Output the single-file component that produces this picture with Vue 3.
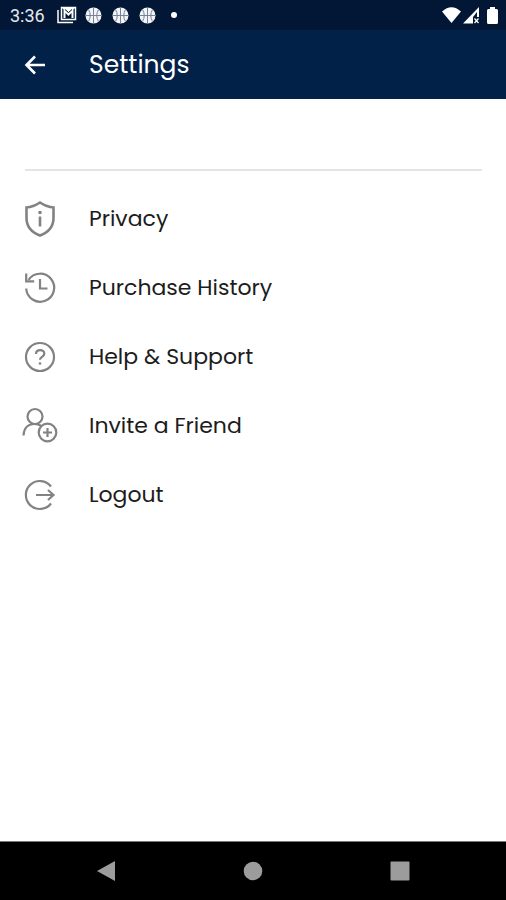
<script setup>
const menuItems = [
  { id: 'privacy', label: 'Privacy' },
  { id: 'history', label: 'Purchase History' },
  { id: 'help', label: 'Help & Support' },
  { id: 'invite', label: 'Invite a Friend' },
  { id: 'logout', label: 'Logout' }
]
</script>

<template>
  <div class="screen">
    <div class="status-bar">
      <span class="time">3:36</span>
      <div class="notifications">
        <svg width="20" height="18" viewBox="0 0 20 18" fill="none" stroke="#fff">
          <path d="M1 4v12.500h15" stroke-width="1.500" />
          <rect x="4.500" y="1.500" width="14" height="12" stroke-width="1.500" />
          <path d="M5 2h13l-6.500 5z" fill="#fff" stroke="none" />
          <path d="M7.500 12V4.500l4 4 4-4V12" stroke-width="2" />
          <path d="M8 3.500l3.500 3 3.500-3" stroke="#011735" stroke-width="1" />
        </svg>
        <svg v-for="n in 3" :key="n" width="17" height="17" viewBox="0 0 17 17">
          <circle cx="8.5" cy="8.5" r="8" fill="#f2f4f6" />
          <g fill="none" stroke="#76829a" stroke-width="1">
            <path d="M8.5 1v15M1 8.5h15M3.5 2.5q3.5 6 0 12M13.5 2.5q-3.5 6 0 12" />
          </g>
        </svg>
      </div>
      <span class="more-dot"></span>
      <div class="system-icons">
        <svg width="19" height="16" viewBox="0 0 19 16">
          <path d="M0 4.500Q9.500-4 19 4.500L9.500 16z" fill="#fff" />
        </svg>
        <svg width="17" height="17" viewBox="0 0 17 17">
          <path d="M0 16.500L16 0v16.500z" fill="#fff" />
          <path d="M10 10l4-5v5z" fill="#011735" />
          <path d="M10 10h7v7h-7z" fill="#011735" />
          <path d="M11.500 11.500l4 4.500M15.500 11.500l-4 4.500" stroke="#fff" stroke-width="1.300" />
        </svg>
        <svg width="11" height="17" viewBox="0 0 11 17">
          <path d="M3 0h5v2h1.500Q11 2 11 3.500v12q0 1.500-1.500 1.500h-8Q0 17 0 15.500v-12Q0 2 1.500 2H3z" fill="#fff" />
        </svg>
      </div>
    </div>

    <header class="app-bar">
      <button class="back" type="button" aria-label="Back">
        <svg width="22" height="20" viewBox="0 0 22 20" fill="none" stroke="#fff" stroke-width="2.6">
          <path d="M21 10H3M11 1.500L2.500 10l8.500 8.500" />
        </svg>
      </button>
      <h1>Settings</h1>
    </header>

    <main class="content">
      <ul class="menu">
        <li v-for="item in menuItems" :key="item.id">
          <a class="menu-item" :href="'#' + item.id">
            <svg class="menu-icon" viewBox="0 0 38 38">
              <template v-if="item.id === 'privacy'">
                <path d="M19 2.500Q26 7 32.500 7.500V18C32.500 27 27 32.500 19 35.500C11 32.500 5.500 27 5.500 18V7.500Q12 7 19 2.500z" stroke-width="2.6" />
                <path d="M19 16.500v10" stroke-width="2.6" />
                <circle class="dot" cx="19" cy="12.500" r="1.800" />
              </template>
              <template v-else-if="item.id === 'history'">
                <path d="M5.200 19.500A14 14 0 1 0 7.500 11" />
                <path d="M5.200 4.500v7.800h8M19 10v9.500h7.500" />
              </template>
              <template v-else-if="item.id === 'help'">
                <circle cx="19" cy="19" r="14" />
                <path d="M15 16c0-5.200 8.300-5 8.300-.5 0 3.500-4.300 3.200-4.300 6.300" />
                <circle class="dot" cx="19" cy="25.500" r="1.300" />
              </template>
              <template v-else-if="item.id === 'invite'">
                <circle cx="14" cy="9.500" r="7.500" />
                <path d="M2.500 28.500C3 20.500 7.500 17 13 17q4.500 0 7.500 2" />
                <circle cx="26.500" cy="25.500" r="8.800" />
                <path d="M26.500 21v9M22 25.500h9" />
              </template>
              <template v-else>
                <path d="M30 10.500A14 14 0 1 0 30 27.500" />
                <path d="M15 19h17M27 14l5.500 5-5.500 5" />
              </template>
            </svg>
            <span>{{ item.label }}</span>
          </a>
        </li>
      </ul>
    </main>

    <nav class="nav-bar">
      <button type="button" aria-label="Back">
        <svg width="20" height="22" viewBox="0 0 20 22"><path d="M1 11L19 1v20z" /></svg>
      </button>
      <button type="button" aria-label="Home">
        <svg width="20" height="20" viewBox="0 0 20 20"><circle cx="10" cy="10" r="9.300" /></svg>
      </button>
      <button type="button" aria-label="Recent apps">
        <svg width="20" height="20" viewBox="0 0 20 20"><rect x="0.500" y="0.500" width="19" height="19" rx="1" /></svg>
      </button>
    </nav>
  </div>
</template>

<style>
body {
  margin: 0;
}
</style>

<style scoped>
.screen {
  display: flex;
  flex-direction: column;
  min-height: 100vh;
  background: #fff;
  font-family: Poppins, Inter, sans-serif;
}

svg {
  display: block;
}

button {
  display: flex;
  align-items: center;
  justify-content: center;
  padding: 0;
  border: none;
  background: none;
  cursor: pointer;
}

.status-bar {
  display: flex;
  align-items: center;
  height: 30px;
  padding: 0 8px 0 10px;
  background: #011735;
  color: #e6e9ee;
}

.time {
  width: 47px;
  font-family: Roboto, sans-serif;
  font-size: 18px;
}

.notifications {
  display: flex;
  align-items: center;
  gap: 10px;
}

.notifications svg:first-child {
  margin-right: -2px;
}

.more-dot {
  width: 6px;
  height: 6px;
  margin-left: 15px;
  border-radius: 50%;
  background: #fff;
}

.system-icons {
  display: flex;
  align-items: center;
  gap: 2px;
  margin-left: auto;
}

.system-icons svg:last-child {
  margin-left: 5px;
}

.app-bar {
  display: flex;
  align-items: center;
  height: 69px;
  padding: 0 24px;
  background: #022149;
  color: #fff;
}

.back {
  width: 22px;
  height: 40px;
  margin-right: 43px;
}

h1 {
  margin: 0;
  font-size: 25px;
  font-weight: 400;
  line-height: 37px;
}

.content {
  flex: 1;
  padding: 70px 24px 24px 25px;
}

.menu {
  margin: 0;
  padding: 13px 0 0;
  border-top: 2px solid #e4e4e4;
  list-style: none;
}

.menu-item {
  display: flex;
  align-items: center;
  gap: 30px;
  height: 69px;
  color: #1c1c1c;
  font-size: 22px;
  text-decoration: none;
}

.menu-icon {
  width: 38px;
  height: 38px;
  margin-left: -4px;
  fill: none;
  stroke: #828282;
  stroke-width: 2.2;
}

.dot {
  fill: #828282;
  stroke: none;
}

.nav-bar {
  display: grid;
  grid-template-columns: repeat(3, 1fr);
  height: 58px;
  padding: 0 33px;
  border-top: 1px solid #777;
  background: #000;
}

.nav-bar svg {
  fill: #9c9c9c;
}
</style>
